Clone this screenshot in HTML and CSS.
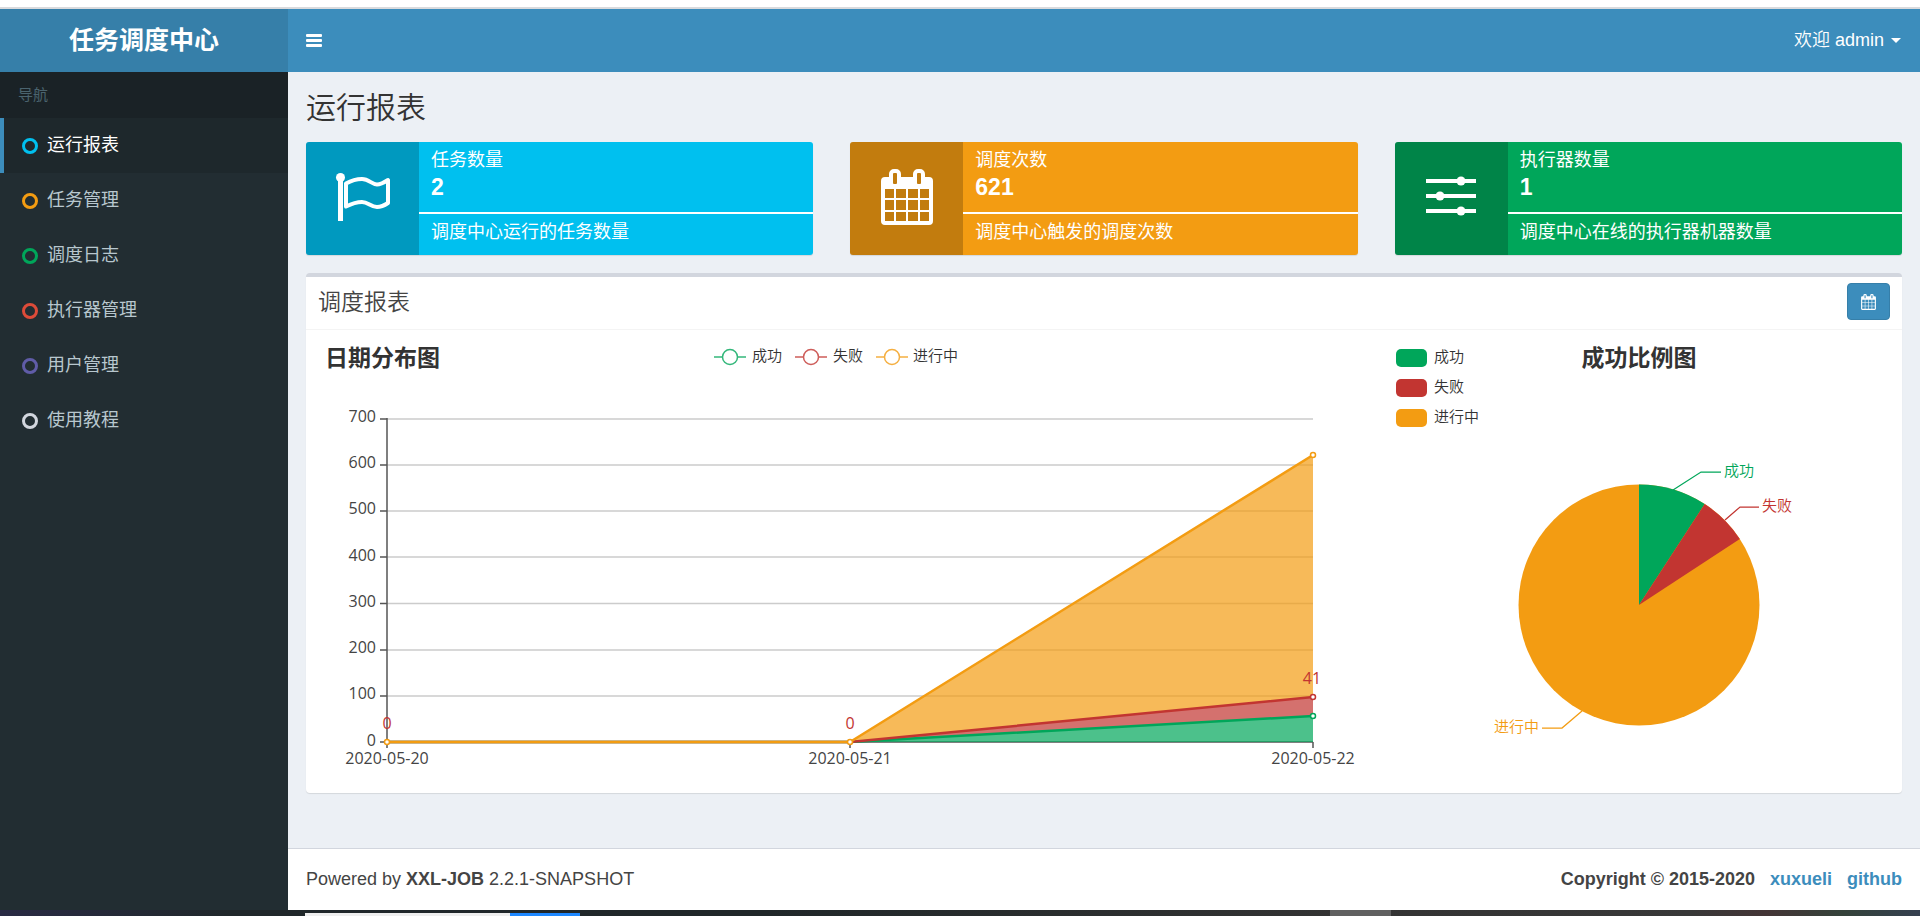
FILE: index.html
```html
<!DOCTYPE html>
<html lang="zh-CN">
<head>
<meta charset="utf-8">
<meta name="viewport" content="width=device-width, initial-scale=1">
<title>任务调度中心</title>
<link rel="stylesheet" href="styles.css">
</head>
<body>
<svg class="sprite" aria-hidden="true">
  <symbol id="icon-calendar" viewBox="0 0 52 56">
    <path fill="currentColor" fill-rule="evenodd" d="M4 8H8V5a5 5 0 0 1 5-5h2a5 5 0 0 1 5 5V8H32V5a5 5 0 0 1 5-5h2a5 5 0 0 1 5 5V8h4a4 4 0 0 1 4 4V52a4 4 0 0 1-4 4H4a4 4 0 0 1-4-4V12a4 4 0 0 1 4-4ZM12 5v9a1 1 0 0 0 1 1h2a1 1 0 0 0 1-1V5a1 1 0 0 0-1-1h-2a1 1 0 0 0-1 1ZM36 5v9a1 1 0 0 0 1 1h2a1 1 0 0 0 1-1V5a1 1 0 0 0-1-1h-2a1 1 0 0 0-1 1ZM4 20h9v9H4ZM15 20h10v9H15ZM27 20h10v9H27ZM39 20h9v9h-9ZM4 31h9v10H4ZM15 31h10v10H15ZM27 31h10v10H27ZM39 31h9v10h-9ZM4 43h9v9H4ZM15 43h10v9H15ZM27 43h10v9H27ZM39 43h9v9h-9Z"/>
  </symbol>
</svg>

<div class="window-edge"></div>

<header class="topbar">
  <a class="logo" href="#">任务调度中心</a>
  <nav class="navbar">
    <button class="menu-toggle" type="button" aria-label="切换导航">
      <svg width="16" height="13" viewBox="0 0 16 13" fill="currentColor" aria-hidden="true"><rect width="16" height="3" rx="1"/><rect y="5" width="16" height="3" rx="1"/><rect y="10" width="16" height="3" rx="1"/></svg>
    </button>
    <button class="user-menu" type="button">欢迎 admin <span class="caret"></span></button>
  </nav>
</header>

<div class="shell">
  <aside class="sidebar">
    <div class="nav-title">导航</div>
    <ul class="nav-list">
      <li><a class="nav-link is-active" href="#"><span class="ring aqua"></span>运行报表</a></li>
      <li><a class="nav-link" href="#"><span class="ring yellow"></span>任务管理</a></li>
      <li><a class="nav-link" href="#"><span class="ring green"></span>调度日志</a></li>
      <li><a class="nav-link" href="#"><span class="ring red"></span>执行器管理</a></li>
      <li><a class="nav-link" href="#"><span class="ring purple"></span>用户管理</a></li>
      <li><a class="nav-link" href="#"><span class="ring gray"></span>使用教程</a></li>
    </ul>
  </aside>

  <div class="page">
    <main class="content">
      <h1 class="page-title">运行报表</h1>

      <section class="stats">
        <div class="stat stat-aqua">
          <div class="stat-icon">
            <svg width="55" height="48" viewBox="0 0 55 48" aria-hidden="true"><circle cx="5.500" cy="4.500" r="4.500" fill="currentColor"/><path d="M3 6h5v42H3z" fill="currentColor"/><path d="M11 10.500Q19 6 27 6C34 6 37 11.500 42 11.500Q46 11.500 53 7V30Q47 34 42 34C36 34 33 29 27 29Q20 29 11 33.500Z" fill="none" stroke="currentColor" stroke-width="4" stroke-linejoin="round"/></svg>
          </div>
          <div class="stat-body">
            <div class="stat-name">任务数量</div>
            <div class="stat-number">2</div>
            <div class="stat-bar"></div>
            <div class="stat-note">调度中心运行的任务数量</div>
          </div>
        </div>
        <div class="stat stat-yellow">
          <div class="stat-icon"><svg width="52" height="56" aria-hidden="true"><use href="#icon-calendar"/></svg></div>
          <div class="stat-body">
            <div class="stat-name">调度次数</div>
            <div class="stat-number">621</div>
            <div class="stat-bar"></div>
            <div class="stat-note">调度中心触发的调度次数</div>
          </div>
        </div>
        <div class="stat stat-green">
          <div class="stat-icon">
            <svg width="50" height="42" viewBox="0 0 50 42" fill="currentColor" aria-hidden="true"><path d="M0 3h50v4H0zM0 18h50v4H0zM0 33h50v4H0z"/><circle cx="35" cy="5" r="4.500"/><circle cx="14" cy="20" r="4.500"/><circle cx="35" cy="35" r="4.500"/></svg>
          </div>
          <div class="stat-body">
            <div class="stat-name">执行器数量</div>
            <div class="stat-number">1</div>
            <div class="stat-bar"></div>
            <div class="stat-note">调度中心在线的执行器机器数量</div>
          </div>
        </div>
      </section>

      <section class="panel">
        <div class="panel-head">
          <h2 class="panel-title">调度报表</h2>
          <button class="range-button" type="button" aria-label="选择日期范围"><svg width="15" height="16" aria-hidden="true"><use href="#icon-calendar"/></svg></button>
        </div>
        <div class="charts">
          <svg class="chart" viewBox="0 0 1064 463" role="img" aria-label="日期分布图">
            <text class="chart-title" x="19" y="36">日期分布图</text>

            <g class="legend-line stroke-green"><path d="M408 27H440"/><circle cx="424" cy="27" r="7.500"/></g>
            <text class="label" x="446" y="31">成功</text>
            <g class="legend-line stroke-red"><path d="M489 27H521"/><circle cx="505" cy="27" r="7.500"/></g>
            <text class="label" x="527" y="31">失败</text>
            <g class="legend-line stroke-yellow"><path d="M570 27H602"/><circle cx="586" cy="27" r="7.500"/></g>
            <text class="label" x="607" y="31">进行中</text>

            <path class="grid" d="M81 89H1007M81 135H1007M81 181H1007M81 227H1007M81 273.500H1007M81 320H1007M81 366H1007"/>
            <path class="axis" d="M81 88V418M74 89h7M74 135h7M74 181h7M74 227h7M74 273.500h7M74 320h7M74 366h7M74 412H1007M544 412v6M1007 412v6"/>
            <g class="tick" text-anchor="end">
              <text x="70" y="92">700</text>
              <text x="70" y="138">600</text>
              <text x="70" y="184">500</text>
              <text x="70" y="231">400</text>
              <text x="70" y="277">300</text>
              <text x="70" y="323">200</text>
              <text x="70" y="369">100</text>
              <text x="70" y="416">0</text>
            </g>
            <g class="tick" text-anchor="middle">
              <text x="81" y="434">2020-05-20</text>
              <text x="544" y="434">2020-05-21</text>
              <text x="1007" y="434">2020-05-22</text>
            </g>

            <path class="area fill-green" d="M544 412L1007 386V412Z"/>
            <path class="area fill-red" d="M544 412L1007 367V386Z"/>
            <path class="area fill-yellow" d="M544 412L1007 125V367Z"/>
            <path class="series stroke-green" d="M81 412H544L1007 386"/>
            <path class="series stroke-red" d="M81 412H544L1007 367"/>
            <path class="series stroke-yellow" d="M81 412H544L1007 125"/>
            <g class="marker stroke-green"><circle cx="1007" cy="386" r="2.500"/></g>
            <g class="marker stroke-red"><circle cx="1007" cy="367" r="2.500"/></g>
            <g class="marker stroke-yellow"><circle cx="81" cy="412" r="2.500"/><circle cx="544" cy="412" r="2.500"/><circle cx="1007" cy="125" r="2.500"/></g>
            <g class="tick value-red" text-anchor="middle">
              <text x="81" y="399">0</text>
              <text x="544" y="399">0</text>
              <text x="1006" y="354">41</text>
            </g>
          </svg>

          <svg class="chart" viewBox="0 0 532 463" role="img" aria-label="成功比例图">
            <rect class="fill-green" x="26" y="19" width="31" height="18" rx="5"/>
            <rect class="fill-red" x="26" y="49" width="31" height="18" rx="5"/>
            <rect class="fill-yellow" x="26" y="79" width="31" height="18" rx="5"/>
            <text class="label" x="64" y="32">成功</text>
            <text class="label" x="64" y="62">失败</text>
            <text class="label" x="64" y="92">进行中</text>
            <text class="chart-title" x="269" y="36" text-anchor="middle">成功比例图</text>

            <circle class="fill-yellow" cx="269" cy="275" r="120.500"/>
            <path class="fill-green" d="M269 275V154.500A120.500 120.500 0 0 1 334.700 174Z"/>
            <path class="fill-red" d="M269 275L334.700 174A120.500 120.500 0 0 1 369.800 209Z"/>
            <path class="leader stroke-green" d="M303 160L331 142H351"/>
            <path class="leader stroke-red" d="M355 190L370 177H389"/>
            <path class="leader stroke-yellow" d="M212 381L192 398H172"/>
            <text class="label fill-green" x="354" y="146">成功</text>
            <text class="label fill-red" x="392" y="181">失败</text>
            <text class="label fill-yellow" x="169" y="402" text-anchor="end">进行中</text>
          </svg>
        </div>
      </section>
    </main>

    <footer class="footer">
      <div>Powered by <b>XXL-JOB</b> 2.2.1-SNAPSHOT</div>
      <div class="footer-links">Copyright © 2015-2020 <a href="#">xuxueli</a> <a href="#">github</a></div>
    </footer>
  </div>
</div>

<div class="taskbar"><span class="task-light"></span><span class="task-blue"></span><span class="task-gray"></span></div>
</body>
</html>
```
FILE: styles.css
```css
* { box-sizing: border-box; }

body {
  margin: 0;
  min-height: 100vh;
  display: flex;
  flex-direction: column;
  background: #fff;
  color: #333;
  font: 350 18px/25px "Liberation Sans", "Noto Sans CJK SC", sans-serif;
}

a { color: #3c8dbc; text-decoration: none; }
b { font-weight: 700; }
button { font: inherit; cursor: pointer; }
svg { display: block; }
.sprite { position: absolute; width: 0; height: 0; }

.window-edge { height: 9px; border-bottom: 2px solid #d9dadd; background: #fff; }

/* Header */
.topbar { display: flex; background: #3c8dbc; color: #fff; }
.logo {
  flex: 0 0 288px;
  background: #367fa9;
  color: #fff;
  font-size: 25px;
  font-weight: 700;
  line-height: 63px;
  text-align: center;
}
.navbar { flex: 1; display: flex; align-items: center; justify-content: space-between; padding: 0 19px 0 18px; }
.menu-toggle, .user-menu { border: 0; padding: 0; background: none; color: inherit; }
.user-menu { display: flex; align-items: center; gap: 7px; line-height: 63px; }
.caret { border: 5px solid transparent; border-top-color: currentColor; border-bottom: 0; }

/* Sidebar */
.shell { flex: 1; display: flex; }
.sidebar { flex: 0 0 288px; background: #222d32; }
.nav-title { padding: 0 18px; background: #1a2226; color: #4b646f; font-size: 15px; font-weight: 400; line-height: 46px; }
.nav-list { margin: 0; padding: 0; list-style: none; }
.nav-link {
  display: flex;
  align-items: center;
  gap: 9px;
  padding-left: 18px;
  border-left: 4px solid transparent;
  color: #b8c7ce;
  font-weight: 400;
  line-height: 55px;
}
.nav-link.is-active { border-left-color: #3c8dbc; background: #1e282c; color: #fff; }
.ring { width: 16px; height: 16px; border: 3px solid; border-radius: 50%; }
.aqua { color: #00c0ef; }
.yellow { color: #f39c12; }
.green { color: #00a65a; }
.red { color: #dd4b39; }
.purple { color: #605ca8; }
.gray { color: #d2d6de; }

/* Content */
.page { flex: 1; min-width: 0; display: flex; flex-direction: column; background: #ecf0f5; }
.content { flex: 1; padding: 18px 18px 0; }
.page-title { margin: 0 0 16px; font-size: 30px; font-weight: 350; line-height: 36px; }

.stats { display: grid; grid-template-columns: repeat(3, 1fr); gap: 37px; margin-bottom: 18px; }
.stat { display: flex; border-radius: 3px; box-shadow: 0 1px 1px rgba(0, 0, 0, .1); overflow: hidden; color: #fff; font-weight: 400; }
.stat-icon {
  flex: 0 0 113px;
  display: flex;
  align-items: center;
  justify-content: center;
  padding-bottom: 3px;
  background: rgba(0, 0, 0, .2);
}
.stat-body { flex: 1; padding: 6px 0 5px; }
.stat-aqua { background: #00c0ef; }
.stat-yellow { background: #f39c12; }
.stat-green { background: #00a65a; }
.stat-name, .stat-number, .stat-note { padding: 0 12px; }
.stat-number { font-size: 23px; font-weight: 700; line-height: 29px; }
.stat-bar { height: 2px; margin-top: 10px; background: #fff; }
.stat-note { line-height: 36px; }

.panel { border-top: 4px solid #d2d6de; border-radius: 4px; background: #fff; box-shadow: 0 1px 1px rgba(0, 0, 0, .1); }
.panel-head {
  display: flex;
  align-items: center;
  justify-content: space-between;
  padding: 6px 12px 9px;
  border-bottom: 1px solid #f4f4f4;
}
.panel-title { margin: 0; color: #444; font-size: 23px; font-weight: 350; line-height: 36px; }
.range-button { padding: 10px 13px 9px; border: 1px solid #367fa9; border-radius: 4px; background: #3c8dbc; color: #fff; }
.charts { display: grid; grid-template-columns: 2fr 1fr; }
.chart { width: 100%; height: auto; }

/* Chart drawing */
.chart-title { fill: #333; font-size: 23px; font-weight: 700; }
.label { font-size: 15px; fill: #333; }
.tick { font-family: "Open Sans", sans-serif; font-size: 16px; font-weight: 400; fill: #444; }
.value-red { fill: #c23531; }
.grid { stroke: #ccc; stroke-width: 1.5; fill: none; }
.axis { stroke: #555; stroke-width: 1.5; fill: none; }
.area { opacity: .7; }
.series { fill: none; stroke-width: 2.5; stroke-linejoin: bevel; }
.marker { fill: #fff; stroke-width: 1.5; }
.legend-line { fill: #fff; stroke-width: 1.5; opacity: .8; }
.leader { fill: none; stroke-width: 1.25; }
.fill-green { fill: #00a65a; }
.fill-red { fill: #c23531; }
.fill-yellow { fill: #f39c12; }
.stroke-green { stroke: #00a65a; }
.stroke-red { stroke: #c23531; }
.stroke-yellow { stroke: #f39c12; }

/* Footer */
.footer {
  display: flex;
  justify-content: space-between;
  padding: 18px;
  border-top: 1px solid #d2d6de;
  background: #fff;
  color: #444;
}
.footer-links { display: flex; gap: 15px; font-weight: 700; }

.taskbar {
  display: grid;
  grid-template-columns: 305fr 205fr 70fr 750fr 61fr 529fr;
  height: 6px;
  background: linear-gradient(90deg, #292a44, #20272a 12%, #202729 40%, #333 70%, #383838 88%, #443536 92%, #34423a 96%, #354050);
}
.task-light { grid-column: 2; margin-top: 3px; background: #eee; }
.task-blue { grid-column: 3; margin-top: 3px; background: #1e88ff; }
.task-gray { grid-column: 5; background: #606060; }
```
